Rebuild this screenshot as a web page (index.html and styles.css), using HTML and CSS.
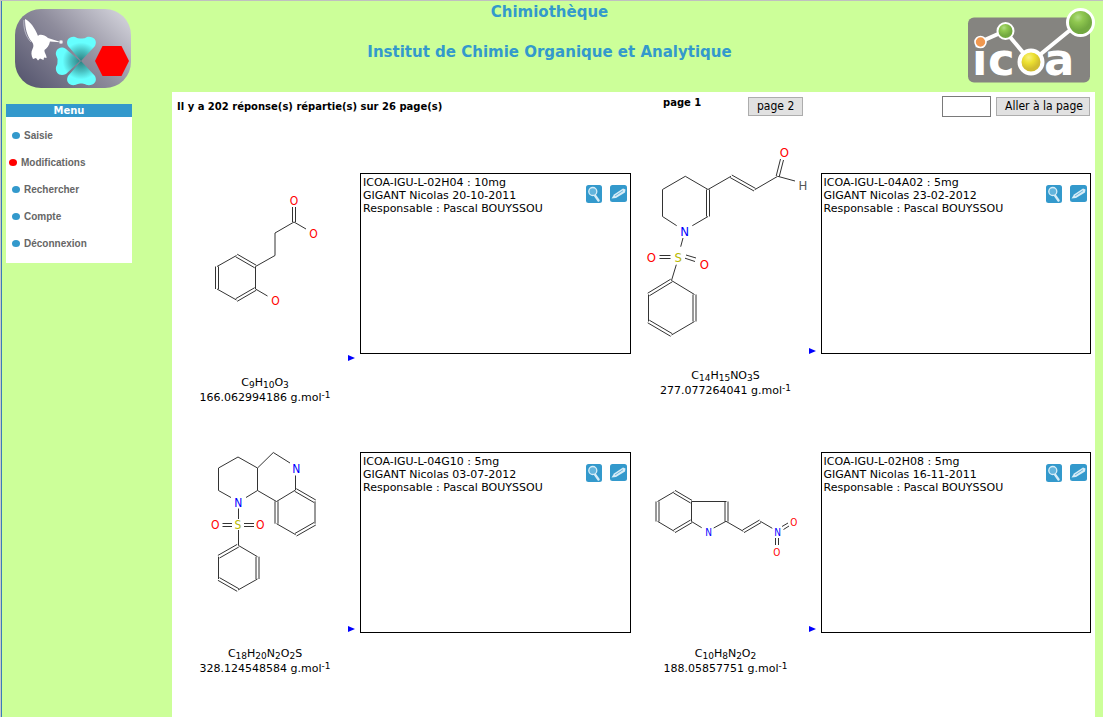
FILE: index.html
```html
<!DOCTYPE html>
<html lang="fr">
<head>
<meta charset="utf-8">
<title>Chimiothèque</title>
<link rel="stylesheet" href="styles.css">
</head>
<body>
<svg class="defs" aria-hidden="true">
  <symbol id="loupe" viewBox="0 0 16 18">
    <rect width="16" height="18" rx="2.5" fill="#3399cc"/>
    <path d="M9 10.500 L12.500 15.500" stroke="#d6ecf7" stroke-width="2.400" stroke-linecap="round"/>
    <circle cx="6.800" cy="6.500" r="4" fill="#63b4dc" stroke="#d6ecf7" stroke-width="1.300"/>
  </symbol>
  <symbol id="crayon" viewBox="0 0 17 17">
    <rect width="17" height="17" rx="2.500" fill="#3399cc"/>
    <path d="M1.500 13.500 L4 9.500 L13 3.500 L15.500 4.500 L15 7.500 L6 13 Z" fill="#d6ecf7"/>
    <path d="M5 11 L13 5.700" stroke="#6cb6dc" stroke-width="1"/>
  </symbol>
  <symbol id="fleche" viewBox="0 0 8 8">
    <path d="M1 1 L8 4 L1 7 Z" fill="#0000ff"/>
  </symbol>
</svg>
<header class="banner">
  <svg class="logo-left" viewBox="15 9 117 80" role="img" aria-label="Chimiothèque">
    <defs>
      <linearGradient id="fond" x1="0" y1=".8" x2="1" y2=".1">
        <stop offset="0" stop-color="#5a5a72"/><stop offset=".5" stop-color="#8e8c9c"/><stop offset="1" stop-color="#d4d4dc"/>
      </linearGradient>
      <radialGradient id="trefle" gradientUnits="userSpaceOnUse" cx="81" cy="61" r="23">
        <stop offset="0" stop-color="#2c7f80"/><stop offset=".45" stop-color="#48bfc0"/><stop offset=".8" stop-color="#66ffff"/>
      </radialGradient>
    </defs>
    <rect x="15" y="9" width="116" height="79" rx="26" fill="url(#fond)"/>
    <path d="M25 19 C30 21 35 28 38 36 C39 34 44 34 48 38 L59 41.500 L60 42.300 L50 41.500 C49 46 47 48 44.500 50 C44 53 47 55 46.500 58 L44 57.500 L43.500 60 L40 58.500 L38 60.500 L36 58 L33 59 C31 55 31 52 32.500 49 C34 46 33.500 44 32 42 C27 36 25 28 25 19 Z" fill="#fff"/>
    <path d="M24 20 C23 28 26 37 31 42" fill="none" stroke="#c8c8d4" stroke-width=".8"/>
    <circle cx="61" cy="42" r="2" fill="#d4d4dc"/><circle cx="61" cy="42" r="1" fill="#fff"/>
    <g fill="url(#trefle)">
      <path d="M81 61 L68 46 C65 40 70 36 75 37 Q79 39 81 38.500 Q84 39 87 37 C93 36 98 40 95 46 Z"/>
      <path d="M81 61 L68 76 C65 82 70 86 75 85 Q79 83 81 83.500 Q84 83 87 85 C93 86 98 82 95 76 Z"/>
      <path d="M80 61 L66 49 C60 45 55 50 56 55 Q58 59 57.500 61 Q58 63 56 67 C55 73 60 77 66 74 Z"/>
    </g>
    <path d="M95 61 L102.500 46 H121.500 L129 61 L121.500 76 H102.500 Z" fill="#f00"/>
  </svg>
  <div class="titles">
    <h1>Chimiothèque</h1>
    <h2>Institut de Chimie Organique et Analytique</h2>
  </div>
  <svg class="logo-right" viewBox="967 7 128 84" role="img" aria-label="icoa">
    <defs>
      <radialGradient id="vert" cx=".4" cy=".3"><stop offset="0" stop-color="#b0dc86"/><stop offset=".4" stop-color="#90c850"/><stop offset="1" stop-color="#72a940"/></radialGradient>
      <radialGradient id="jaune" cx=".4" cy=".3"><stop offset="0" stop-color="#f8f080"/><stop offset=".5" stop-color="#ece030"/><stop offset="1" stop-color="#d0bc30"/></radialGradient>
    </defs>
    <rect x="968" y="17.500" width="122" height="65" rx="6" fill="#858480"/>
    <text class="logo-word" y="75"><tspan x="972">i</tspan><tspan x="988">c</tspan><tspan x="1044">a</tspan></text>
    <path d="M980 42 L1005 31 L1031 62 L1080 22" fill="none" stroke="#fff" stroke-width="4"/>
    <circle cx="980.500" cy="42" r="5.500" fill="#f09850" stroke="#fff" stroke-width="1.600"/>
    <circle cx="1005.500" cy="31" r="8" fill="url(#vert)" stroke="#fff" stroke-width="2"/>
    <circle cx="1031" cy="62" r="11.500" fill="url(#jaune)" stroke="#fff" stroke-width="4"/>
    <circle cx="1080.500" cy="22.500" r="13" fill="url(#vert)" stroke="#fff" stroke-width="3"/>
  </svg>
</header>
<div class="page">
  <nav class="menu">
    <h3>Menu</h3>
    <ul>
      <li><a href="#">Saisie</a></li>
      <li class="active"><a href="#">Modifications</a></li>
      <li><a href="#">Rechercher</a></li>
      <li><a href="#">Compte</a></li>
      <li><a href="#">Déconnexion</a></li>
    </ul>
  </nav>
  <main class="content">
    <form class="toolbar">
      <strong class="count">Il y a 202 réponse(s) répartie(s) sur 26 page(s)</strong>
      <strong class="current">page 1</strong>
      <div><button type="button">page 2</button></div>
      <input type="text" aria-label="Numéro de page">
      <button type="submit">Aller à la page</button>
    </form>
    <div class="results">
      <article class="result">
        <figure>
          <div class="drawing">
            <svg class="molecule" width="174" height="240" viewBox="172 122 174 240">
              <path d="M236.500 255.500 L217 266.500 M217 289 L236.500 300 M255.500 289 V266.500 L275 255.500 V233 L294 222 L306 229 M255.500 289 L267.500 296
              M237.200 254.200 L256.200 265.200 M235.700 256.800 L254.700 267.800 M215.500 266.500 V289 M218.500 266.500 V289 M237.200 301.300 L256.200 290.300 M235.700 298.700 L254.700 287.700 M292.500 222 V207 M295.500 222 V207"/>
              <g class="o"><text x="294" y="205">O</text><text x="313.500" y="238">O</text><text x="275.500" y="305">O</text></g>
            </svg>
            <svg class="arrow"><use href="#fleche"/></svg>
          </div>
          <figcaption>C<sub>9</sub>H<sub>10</sub>O<sub>3</sub><br>166.062994186 g.mol<sup>-1</sup></figcaption>
        </figure>
        <section class="sample">
          <p>ICOA-IGU-L-02H04 : 10mg<br>GIGANT Nicolas 20-10-2011<br>Responsable : Pascal BOUYSSOU</p>
          <a href="#" aria-label="Voir"><svg class="view"><use href="#loupe"/></svg></a>
          <a href="#" aria-label="Modifier"><svg class="edit"><use href="#crayon"/></svg></a>
        </section>
      </article>
      <article class="result">
        <figure>
          <div class="drawing">
            <svg class="molecule large" width="174" height="226" viewBox="633 129 174 226">
              <path d="M676.700 225.700 L662.500 216.500 V189.500 L685.300 176.300 L708 189.500 L731 176.300 M692.300 225.700 L708 216.500 M754.700 189.700 L777.700 176.300 L795 181 M683 238 L680.700 246.700 M676.300 264.700 L671.500 280.500 L694.500 294.500 M648.500 294.500 V321.500 M694.500 321.500 L671.500 335
              M706.500 189.500 V216.500 M709.500 189.500 V216.500 M731.800 175 L755.500 188.400 M730.200 177.600 L754 191 M776.200 176 L780.500 159 M779.200 176.800 L783.500 160 M659.500 255.500 H670.500 M659.500 258.500 H670.500 M686 255 L696 258 M685 258.200 L695 261.500 M670.700 279.200 L647.700 293.200 M672.300 281.800 L649.300 295.800 M693 294.500 V321.500 M696 294.500 V321.500 M647.700 322.800 L670.700 336.300 M649.300 320.200 L672.300 333.700"/>
              <g class="o"><text x="784.300" y="157">O</text><text x="651.300" y="262">O</text><text x="704.300" y="269">O</text></g>
              <text class="n" x="684.500" y="236">N</text><text class="s" x="678.300" y="262">S</text><text class="h" x="803" y="190">H</text>
            </svg>
            <svg class="arrow"><use href="#fleche"/></svg>
          </div>
          <figcaption>C<sub>14</sub>H<sub>15</sub>NO<sub>3</sub>S<br>277.077264041 g.mol<sup>-1</sup></figcaption>
        </figure>
        <section class="sample">
          <p>ICOA-IGU-L-04A02 : 5mg<br>GIGANT Nicolas 23-02-2012<br>Responsable : Pascal BOUYSSOU</p>
          <a href="#" aria-label="Voir"><svg class="view"><use href="#loupe"/></svg></a>
          <a href="#" aria-label="Modifier"><svg class="edit"><use href="#crayon"/></svg></a>
        </section>
      </article>
      <article class="result">
        <figure>
          <div class="drawing">
            <svg class="molecule" width="174" height="224" viewBox="172 409 174 224">
              <path d="M231 497.500 L218.500 490.500 V468 L238 457 L257.500 468 V490.500 L246 497.500 M257.500 468 L273.300 452.500 L290 463 M295.500 475.500 V490 L276.500 501.500 L257.500 490.500 M315 501.300 V523.700 M295.700 534.700 L276.500 523.700 M238.500 508.500 V519 M238.500 530 V545.500 L257.500 556.700 M257.500 579 L238 590 M218.500 579 V556.700
              M296.300 488.700 L315.800 500 M294.700 491.300 L314.200 502.600 M296.500 536 L315.800 525 M295 533.400 L314.200 522.400 M275 501.300 V523.700 M278 501.300 V523.700 M222.500 523.500 H232 M222.500 526.500 H232 M244 523.500 H254 M244 526.500 H254 M237.200 544.400 L217.900 555.400 M238.800 547 L219.500 558 M256 556.700 V579 M259 556.700 V579 M217.900 580.300 L237.200 591.300 M219.500 577.700 L238.800 588.700"/>
              <g class="o"><text x="215.300" y="529">O</text><text x="260.300" y="529">O</text></g>
              <g class="n"><text x="238.300" y="507">N</text><text x="296.300" y="473">N</text></g><text class="s" x="238" y="529">S</text>
            </svg>
            <svg class="arrow"><use href="#fleche"/></svg>
          </div>
          <figcaption>C<sub>18</sub>H<sub>20</sub>N<sub>2</sub>O<sub>2</sub>S<br>328.124548584 g.mol<sup>-1</sup></figcaption>
        </figure>
        <section class="sample">
          <p>ICOA-IGU-L-04G10 : 5mg<br>GIGANT Nicolas 03-07-2012<br>Responsable : Pascal BOUYSSOU</p>
          <a href="#" aria-label="Voir"><svg class="view"><use href="#loupe"/></svg></a>
          <a href="#" aria-label="Modifier"><svg class="edit"><use href="#crayon"/></svg></a>
        </section>
      </article>
      <article class="result">
        <figure>
          <div class="drawing">
            <svg class="molecule small" width="174" height="224" viewBox="633 409 174 224">
              <path d="M657.500 501.500 L674.300 491.700 M657.500 521.300 L674.300 531.300 M701.700 527.700 L691.500 521.500 V501.500 H726.500 M713.700 528 L726 521.300 L743.300 531.300 M760.300 521.300 L772.300 528.300
              M675 490.400 L692 500.400 M673.600 493 L690.600 503 M656 501.500 V521.500 M659 501.500 V521.500 M675 532.600 L692 522.600 M673.600 530 L690.600 520 M725 501.500 V521.500 M728 501.500 V521.500 M744 532.600 L761 522.600 M742.600 530 L759.600 520 M782 526.500 L788 523 M783.500 529.500 L789 526 M775.500 538 V545 M778.500 538 V545"/>
              <g class="o"><text x="793.700" y="526">O</text><text x="776.700" y="556">O</text></g>
              <g class="n"><text x="708.700" y="536">N</text><text x="777.700" y="536">N</text></g>
            </svg>
            <svg class="arrow"><use href="#fleche"/></svg>
          </div>
          <figcaption>C<sub>10</sub>H<sub>8</sub>N<sub>2</sub>O<sub>2</sub><br>188.05857751 g.mol<sup>-1</sup></figcaption>
        </figure>
        <section class="sample">
          <p>ICOA-IGU-L-02H08 : 5mg<br>GIGANT Nicolas 16-11-2011<br>Responsable : Pascal BOUYSSOU</p>
          <a href="#" aria-label="Voir"><svg class="view"><use href="#loupe"/></svg></a>
          <a href="#" aria-label="Modifier"><svg class="edit"><use href="#crayon"/></svg></a>
        </section>
      </article>
    </div>
  </main>
</div>
</body>
</html>
```
FILE: styles.css
```css
* { box-sizing: border-box; }
body {
  margin: 0;
  min-height: 100vh;
  display: flex;
  flex-direction: column;
  background: #ccff99;
  border-top: 1px solid #c0c0c0;
  border-left: 1px solid #c8c8c8;
  box-shadow: inset 1px 0 #3a7cb8;
  font: 11px/13px Verdana, "DejaVu Sans", sans-serif;
  color: #000;
}
svg { display: block; }
.defs { position: absolute; width: 0; height: 0; }
h1, h2, h3, p, ul, figure { margin: 0; padding: 0; }

.banner {
  display: flex;
  align-items: flex-start;
  height: 91px;
  padding: 0 8px 0 14px;
}
.logo-left { width: 117px; height: 80px; margin-top: 8px; }
.logo-right { width: 128px; height: 84px; margin-top: 6px; }
.logo-word { font: bold 45px "DejaVu Sans", sans-serif; fill: #fff; }
.titles { flex: 1; padding-top: 1px; text-align: center; color: #3399cc; }
.titles h1, .titles h2 { font-size: 15px; line-height: 20px; }
.titles h2 { margin-top: 20px; }

.page { flex: 1; display: flex; align-items: stretch; padding-right: 8px; }
.menu {
  flex: none;
  align-self: flex-start;
  width: 126px;
  margin: 12px 40px 0 5px;
  background: #fff;
}
.menu h3 {
  background: #3399cc;
  color: #fff;
  font-size: 10px;
  line-height: 13px;
  text-align: center;
}
.menu ul { list-style: none; padding: 5px 0 6px 6px; }
.menu li { display: flex; align-items: center; gap: 4px; height: 27px; }
.menu li::before {
  content: "";
  width: 8px;
  height: 7px;
  border-radius: 50%;
  background: #3399cc;
}
.menu li.active { margin-left: -3px; }
.menu li.active::before { background: #f00; }
.menu a { font: bold 10px/13px "Liberation Sans", sans-serif; color: #666; text-decoration: none; }

.content { flex: 1; background: #fff; }
.toolbar {
  display: grid;
  grid-template-columns: 486fr 85fr 194fr 49px 99px;
  align-items: center;
  height: 28px;
  margin-bottom: 2px;
  padding: 0 5px;
}
.toolbar strong { font-size: 10px; }
.toolbar .current { align-self: start; margin-top: 4px; }
.toolbar input { height: 21px; width: 49px; border: 1px solid #7a7a7a; background: #fff; }
.toolbar button {
  height: 19px;
  padding: 0 8px;
  border: 1px solid #adadad;
  background: #e1e1e1;
  font: 12px/15px Tahoma, "DejaVu Sans Condensed", sans-serif;
  color: #000;
  white-space: nowrap;
}
.toolbar > button { margin-left: 5px; }

.results {
  display: grid;
  grid-template-columns: 1fr 1fr;
  grid-auto-rows: minmax(275px, auto);
  padding-right: 2px;
}
.result { display: flex; align-items: center; gap: 2px; padding-right: 2px; }
figure { flex: none; width: 186px; }
.drawing { display: flex; align-items: flex-end; gap: 1px; }
.arrow { width: 8px; height: 8px; }
figcaption { margin-top: 13px; text-align: center; line-height: 15px; }
sub, sup { font-size: 9px; line-height: 0; }
sub { vertical-align: -2px; }
sup { vertical-align: 3px; }
.sample {
  flex: 1;
  display: flex;
  align-items: flex-start;
  height: 181px;
  padding: 2px 3px 3px 2px;
  border: 1px solid #000;
}
.sample p { flex: 1; white-space: nowrap; }
.sample a { margin: 9px 0 0 8px; }
.view { width: 16px; height: 18px; }
.edit { width: 17px; height: 17px; }

.molecule { font: 12px Tahoma, "DejaVu Sans Condensed", sans-serif; text-anchor: middle; }
.molecule.large { font-size: 13px; }
.molecule.small { font-size: 10px; }
.molecule path { fill: none; stroke: #333; stroke-width: 1; }
.o { fill: #f00; }
.n { fill: #00f; }
.s { fill: #b8b800; }
.h { fill: #555; }
```
